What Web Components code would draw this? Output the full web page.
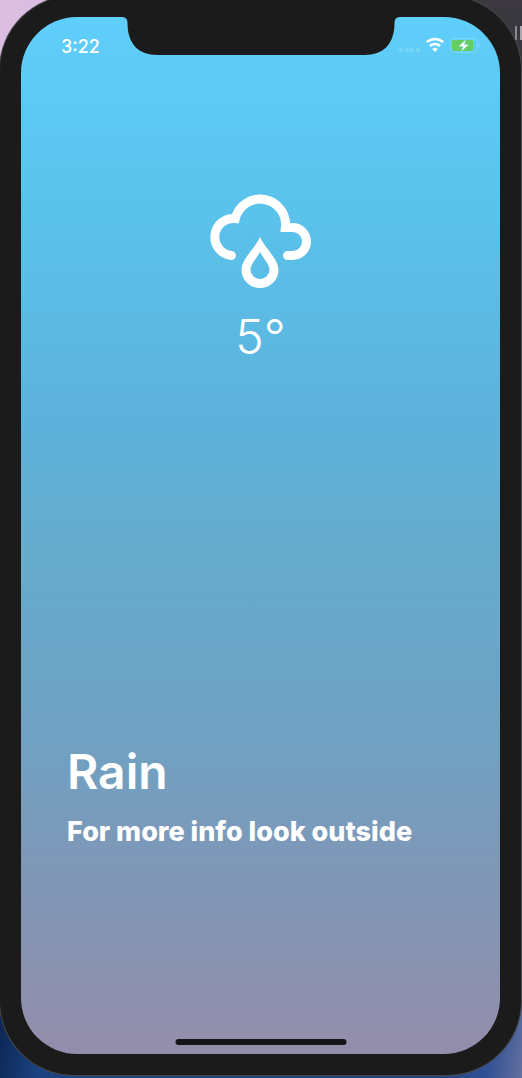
<!DOCTYPE html>
<html lang="en">
<head>
<meta charset="utf-8">
<meta name="viewport" content="width=device-width, initial-scale=1">
<title>Weather</title>
<style>
  html { background: #202022; }
  body {
    margin: 0;
    min-height: 100vh;
    display: flex;
    flex-direction: column;
    overflow: hidden;
    color: #fff;
    font-family: Inter, "Liberation Sans", sans-serif;
    background:
      linear-gradient(#aaa8ae, #aaa8ae) 100% 26px / 2px 14px no-repeat,
      linear-gradient(#8c8a90, #8c8a90) calc(100% - 5px) 26px / 2px 14px no-repeat,
      linear-gradient(110deg, #dcc0e2, #c3a1cf) 0 0 / 50% 60px no-repeat,
      linear-gradient(#3b3840, #333136) 100% 0 / 50% 205px no-repeat,
      linear-gradient(100deg, #0b2350, #1c4382 10%, #24447e 85%, #2f5095 93%, #64709f) 0 100% / 100% 90px no-repeat,
      #2a2a2c;
  }
</style>
</head>
<body>
<phone-frame>
  <status-bar slot="status" time="3:22"></status-bar>
  <weather-now temperature="5°"></weather-now>
  <weather-summary>
    <span slot="title">Rain</span>
    <span slot="subtitle">For more info look outside</span>
  </weather-summary>
</phone-frame>

<template id="phone-frame">
  <style>
    :host {
      flex: 1;
      display: flex;
      box-sizing: border-box;
      margin: -4px 1px 3px 0;
      padding: 21px;
      background: #1b1b1b;
      border-radius: 74px;
      box-shadow: 0 0 0 1px #47474b;
    }
    main {
      position: relative;
      flex: 1;
      display: grid;
      grid-template-rows: 1fr 1fr;
      overflow: hidden;
      border-radius: 56px;
      background: linear-gradient(#60cefb, #5ac3ec 18%, #5db1da 40%, #64adcf 49%, #70a1c2 70%, #7d98b8 81%, #948dab);
    }
    .status { position: absolute; top: 0; left: 0; right: 0; }
    .notch { position: absolute; top: 0; left: 50%; transform: translateX(-50%); display: block; }
    .home {
      position: absolute;
      bottom: 9px;
      left: 50%;
      transform: translateX(-50%);
      width: 171px;
      height: 6px;
      border-radius: 3px;
      background: #15161a;
    }
  </style>
  <main>
    <slot></slot>
    <div class="status"><slot name="status"></slot></div>
    <svg class="notch" width="279" height="38" viewBox="0 0 279 38" aria-hidden="true">
      <path d="M0 0C4 0 6 2 6 6C6 27 17 38 36 38H243C262 38 273 27 273 6C273 2 275 0 279 0Z" fill="#1b1b1b"/>
    </svg>
    <div class="home"></div>
  </main>
</template>

<template id="status-bar">
  <style>
    :host {
      display: flex;
      justify-content: space-between;
      align-items: center;
      height: 24px;
      padding: 18px 20px 0 40px;
      font-size: 18px;
      line-height: 24px;
      font-weight: 500;
    }
    .icons { display: flex; align-items: center; }
    svg { display: block; }
  </style>
  <time></time>
  <div class="icons">
    <svg width="84" height="20" viewBox="0 0 84 20" aria-hidden="true">
      <g fill="#7bdcf4" opacity=".7">
        <rect x="3" y="11" width="4" height="4" rx="1"/><rect x="9" y="11" width="4" height="4" rx="1"/>
        <rect x="14" y="11" width="4" height="4" rx="1"/><rect x="20" y="11" width="4" height="4" rx="1"/>
      </g>
      <g fill="none" stroke="#fff" stroke-width="2.5">
        <path d="M30.800 5.200A12 12 0 0 1 47.200 5.200"/>
        <path d="M33.900 9A7.500 7.500 0 0 1 44.100 9"/>
      </g>
      <path d="M36.200 12A4 4 0 0 1 41.800 12L39 15Z" fill="#fff"/>
      <rect x="54.500" y="1.500" width="27" height="14" rx="4" fill="none" stroke="#84def2" stroke-opacity=".75"/>
      <path d="M83 6.500Q85 8.500 83 10.500Z" fill="#84def2"/>
      <rect x="56" y="3" width="21" height="11" rx="2" fill="#66cd63"/>
      <path d="M70 2.500L62.500 9.500H67L65 14.800L73 7.500H68.500Z" fill="#fff" stroke="#74d8c8" stroke-width=".6"/>
    </svg>
  </div>
</template>

<template id="weather-now">
  <style>
    :host {
      display: flex;
      flex-direction: column;
      align-items: center;
      justify-content: center;
      gap: 16px;
      padding-top: 2px;
    }
    svg { display: block; }
    .temp { font-size: 48px; line-height: 58px; font-weight: 300; }
  </style>
  <svg width="104" height="104" viewBox="19 8 104 104" role="img" aria-label="Rain cloud">
    <path d="M41.500 75.500A18.500 18.500 0 1 1 45.300 38.500A25.500 25.500 0 0 1 95.400 47.500H102.500A14 14 0 0 1 102.500 75.500H97.500" fill="none" stroke="#fff" stroke-width="9" stroke-linecap="round" stroke-miterlimit="10"/>
    <path fill="#fff" fill-rule="evenodd" d="M70 57C66 67 51.500 79 51.500 90A18.500 18 0 0 0 88.500 90C88.500 79 74 67 70 57ZM70 72C67 78 60.500 84 60.500 90A9.500 9 0 0 0 79.500 90C79.500 84 73 78 70 72Z"/>
  </svg>
  <div class="temp"></div>
</template>

<template id="weather-summary">
  <style>
    :host {
      display: flex;
      flex-direction: column;
      justify-content: flex-end;
      gap: 12px;
      padding: 0 46px 204px;
    }
    h1, h2 { margin: 0; }
    h1 { font-size: 48px; line-height: 60px; font-weight: 600; }
    h2 { font-size: 27px; line-height: 36px; font-weight: 800; }
  </style>
  <h1><slot name="title"></slot></h1>
  <h2><slot name="subtitle"></slot></h2>
</template>

<script>
  class TemplateElement extends HTMLElement {
    constructor() {
      super();
      const template = document.getElementById(this.localName);
      this.attachShadow({ mode: "open" }).append(template.content.cloneNode(true));
    }
  }

  class PhoneFrame extends TemplateElement {}

  class StatusBar extends TemplateElement {
    connectedCallback() {
      this.shadowRoot.querySelector("time").textContent = this.getAttribute("time");
    }
  }

  class WeatherNow extends TemplateElement {
    connectedCallback() {
      this.shadowRoot.querySelector(".temp").textContent = this.getAttribute("temperature");
    }
  }

  class WeatherSummary extends TemplateElement {}

  customElements.define("phone-frame", PhoneFrame);
  customElements.define("status-bar", StatusBar);
  customElements.define("weather-now", WeatherNow);
  customElements.define("weather-summary", WeatherSummary);
</script>
</body>
</html>
